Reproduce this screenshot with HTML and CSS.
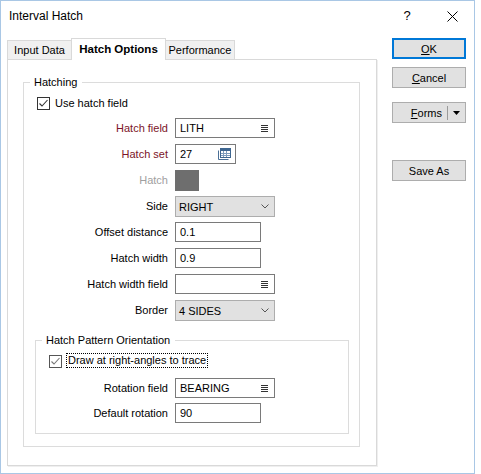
FILE: index.html
```html
<!DOCTYPE html>
<html>
<head>
<meta charset="utf-8">
<title>Interval Hatch</title>
<link rel="stylesheet" href="styles.css">
</head>
<body>
<div class="window">
  <div class="titlebar">
    <span class="title">Interval Hatch</span>
    <span class="help">?</span>
    <span class="close"><svg width="11" height="11" viewBox="0 0 11 11"><path d="M0.5 0.5L10.5 10.5M10.5 0.5L0.5 10.5" stroke="#000" stroke-width="1" fill="none"/></svg></span>
  </div>
  <div class="main">
    <div class="tabctl">
      <div class="tabs">
        <div class="tab first">Input Data</div>
        <div class="tab active">Hatch Options</div>
        <div class="tab last">Performance</div>
      </div>
      <div class="panel">
        <fieldset class="group">
          <legend>Hatching</legend>
          <div class="check">
            <span class="box"><svg width="11" height="11" viewBox="0 0 11 11"><path d="M1.5 5.5L4 8L9.5 2" stroke="#333" stroke-width="1.1" fill="none"/></svg></span>
            <span class="check-text">Use hatch field</span>
          </div>
          <div class="form">
            <span class="lbl req">Hatch field</span>
            <div class="input w100"><span>LITH</span><svg class="ico-list" width="7" height="8" viewBox="0 0 7 8"><path d="M0 1.5h7M0 3.5h7M0 5.5h7M0 7.5h7" stroke="#333" stroke-width="1"/></svg></div>

            <span class="lbl req">Hatch set</span>
            <div class="input w61"><span>27</span><svg class="ico-table" width="13" height="12" viewBox="0 0 13 12"><path d="M0.5 2.5V11.5H10.5" stroke="#4a6f96" fill="none"/><rect x="2.5" y="0.5" width="10" height="9" fill="#fff" stroke="#3e6690"/><rect x="3" y="1" width="9" height="2" fill="#3e6690"/><path d="M3 5.5h9M3 7.5h9M5.5 3v6M8.5 3v6" stroke="#7e9cbd" fill="none"/></svg></div>

            <span class="lbl dis">Hatch</span>
            <div class="swatch"></div>

            <span class="lbl">Side</span>
            <div class="combo w100"><span>RIGHT</span><svg class="chev" width="8" height="5" viewBox="0 0 8 5"><path d="M0.5 0.5L4 4L7.5 0.5" stroke="#555" fill="none"/></svg></div>

            <span class="lbl">Offset distance</span>
            <div class="input w86"><span>0.1</span></div>

            <span class="lbl">Hatch width</span>
            <div class="input w86"><span>0.9</span></div>

            <span class="lbl">Hatch width field</span>
            <div class="input w100"><span></span><svg class="ico-list" width="7" height="8" viewBox="0 0 7 8"><path d="M0 1.5h7M0 3.5h7M0 5.5h7M0 7.5h7" stroke="#333" stroke-width="1"/></svg></div>

            <span class="lbl">Border</span>
            <div class="combo w100"><span>4 SIDES</span><svg class="chev" width="8" height="5" viewBox="0 0 8 5"><path d="M0.5 0.5L4 4L7.5 0.5" stroke="#555" fill="none"/></svg></div>
          </div>

          <fieldset class="group sub">
            <legend>Hatch Pattern Orientation</legend>
            <div class="check sub-check">
              <span class="box light"><svg width="11" height="11" viewBox="0 0 11 11"><path d="M1.5 5.5L4 8L9.5 2" stroke="#777" stroke-width="1.1" fill="none"/></svg></span>
              <span class="check-text focus">Draw at right-angles to trace</span>
            </div>
            <div class="form sub-form">
              <span class="lbl">Rotation field</span>
              <div class="input w100"><span>BEARING</span><svg class="ico-list" width="7" height="8" viewBox="0 0 7 8"><path d="M0 1.5h7M0 3.5h7M0 5.5h7M0 7.5h7" stroke="#333" stroke-width="1"/></svg></div>

              <span class="lbl">Default rotation</span>
              <div class="input w86"><span>90</span></div>
            </div>
          </fieldset>
        </fieldset>
      </div>
    </div>
    <div class="buttons">
      <div class="btn default"><span><u>O</u>K</span></div>
      <div class="btn cancel"><span><u>C</u>ancel</span></div>
      <div class="btn split"><span class="split-label"><u>F</u>orms</span><span class="split-sep"></span><span class="split-arrow"><svg width="7" height="4" viewBox="0 0 7 4"><path d="M0 0H7L3.5 4Z" fill="#000"/></svg></span></div>
      <div class="btn saveas"><span>Save As</span></div>
    </div>
  </div>
</div>
</body>
</html>
```

FILE: styles.css
```css
* {
  box-sizing: border-box;
}

html, body {
  margin: 0;
  padding: 0;
  background: #fff;
}

body {
  width: 481px;
  height: 474px;
  font-family: "Liberation Sans", Arial, sans-serif;
  font-size: 11px;
  color: #000;
}

.window {
  width: 475px;
  height: 474px;
  border: 1px solid #a9c7e5;
  background: #fff;
}

/* Title bar */
.titlebar {
  height: 30px;
  display: flex;
  align-items: center;
  padding: 0 12px 0 8px;
}

.title {
  font-size: 12px;
  line-height: 14px;
}

.help {
  margin-left: auto;
  width: 20px;
  text-align: center;
  font-size: 13px;
  line-height: 14px;
}

.close {
  width: 20px;
  margin-left: 25px;
  display: flex;
  justify-content: center;
}

/* Main area */
.main {
  display: flex;
  align-items: flex-start;
  padding-left: 6px;
  margin-top: 7px;
}

.tabctl {
  width: 370px;
}

.tabs {
  display: flex;
  align-items: flex-end;
  height: 21px;
}

.tab {
  height: 19px;
  line-height: 18px;
  text-align: center;
  background: #f0f0f0;
  border: 1px solid #d9d9d9;
  border-bottom: none;
}

.tab.first {
  width: 65px;
}

.tab.active {
  position: relative;
  z-index: 1;
  width: 95px;
  height: 22px;
  line-height: 20px;
  margin-left: -1px;
  margin-bottom: -1px;
  background: #fff;
  font-weight: bold;
  font-size: 11.5px;
}

.tab.last {
  width: 70px;
  margin-left: -1px;
}

.panel {
  width: 370px;
  height: 407px;
  border: 1px solid #d9d9d9;
  box-shadow: 1px 1px 0 #efefef;
  background: #fff;
  padding: 15px 0 0 15px;
}

/* Group boxes */
.group {
  margin: 0;
  padding: 0 0 12px 0;
  width: 337px;
  border: 1px solid #dcdcdc;
  min-width: 0;
}

.group legend {
  margin-left: 6px;
  padding: 0 5px 0 4px;
  line-height: 14px;
  font-size: 11px;
}

.group.sub {
  width: 314px;
  margin: 7px 0 0 11px;
  padding: 0 0 10px 0;
}

/* Checkboxes */
.check {
  display: flex;
  align-items: center;
  height: 15px;
  margin: 7px 0 0 13px;
}

.box {
  width: 13px;
  height: 13px;
  border: 1px solid #333;
  background: #fff;
  display: flex;
  margin-right: 5px;
}

.box.light {
  border-color: #555;
  margin-right: 4px;
  align-self: flex-end;
}

.check-text {
  line-height: 15px;
}

.sub-check {
  margin-top: 6px;
  align-items: center;
}

.check-text.focus {
  line-height: 13px;
  border: 1px dotted #000;
  padding: 0 1px;
}

/* Forms */
.form {
  display: grid;
  grid-template-columns: 144px auto;
  column-gap: 7px;
  grid-auto-rows: 26px;
  align-items: start;
  justify-items: start;
  margin-top: 7px;
}

.sub-form {
  grid-template-columns: 132px auto;
  grid-auto-rows: 20px;
  row-gap: 5px;
  margin-top: 10px;
}

.lbl {
  justify-self: end;
  line-height: 20px;
  white-space: nowrap;
}

.lbl.req {
  color: #7c1428;
}

.lbl.dis {
  color: #a0a0a0;
}

.input {
  height: 20px;
  border: 1px solid #7a7a7a;
  background: #fff;
  display: flex;
  align-items: center;
  padding-left: 4px;
  white-space: nowrap;
}

.combo {
  height: 21px;
  border: 1px solid #adadad;
  background: #e1e1e1;
  display: flex;
  align-items: center;
  padding-left: 3px;
}

.w100 { width: 100px; }
.w86 { width: 86px; }
.w61 { width: 61px; }

.ico-list {
  margin-left: auto;
  margin-right: 6px;
}

.ico-table {
  margin-left: auto;
  margin-right: 4px;
}

.chev {
  margin-left: auto;
  margin-right: 5px;
}

.swatch {
  width: 24px;
  height: 21px;
  background: #6e6e6e;
}

/* Buttons */
.buttons {
  width: 74px;
  margin-left: 15px;
  display: flex;
  flex-direction: column;
}

.btn {
  height: 21px;
  border: 1px solid #adadad;
  background: #e1e1e1;
  display: flex;
  align-items: center;
  justify-content: center;
  line-height: 14px;
}

.btn.default {
  border: 2px solid #0078d7;
}

.btn.cancel {
  margin-top: 8px;
}

.btn.split {
  margin-top: 14px;
  justify-content: flex-start;
}

.split-label {
  width: 54px;
  text-align: right;
  padding-right: 5px;
}

.split-sep {
  width: 1px;
  height: 14px;
  background: #9a9a9a;
}

.split-arrow {
  flex: 1;
  display: flex;
  justify-content: center;
  align-items: center;
}

.btn.saveas {
  margin-top: 37px;
}
```
